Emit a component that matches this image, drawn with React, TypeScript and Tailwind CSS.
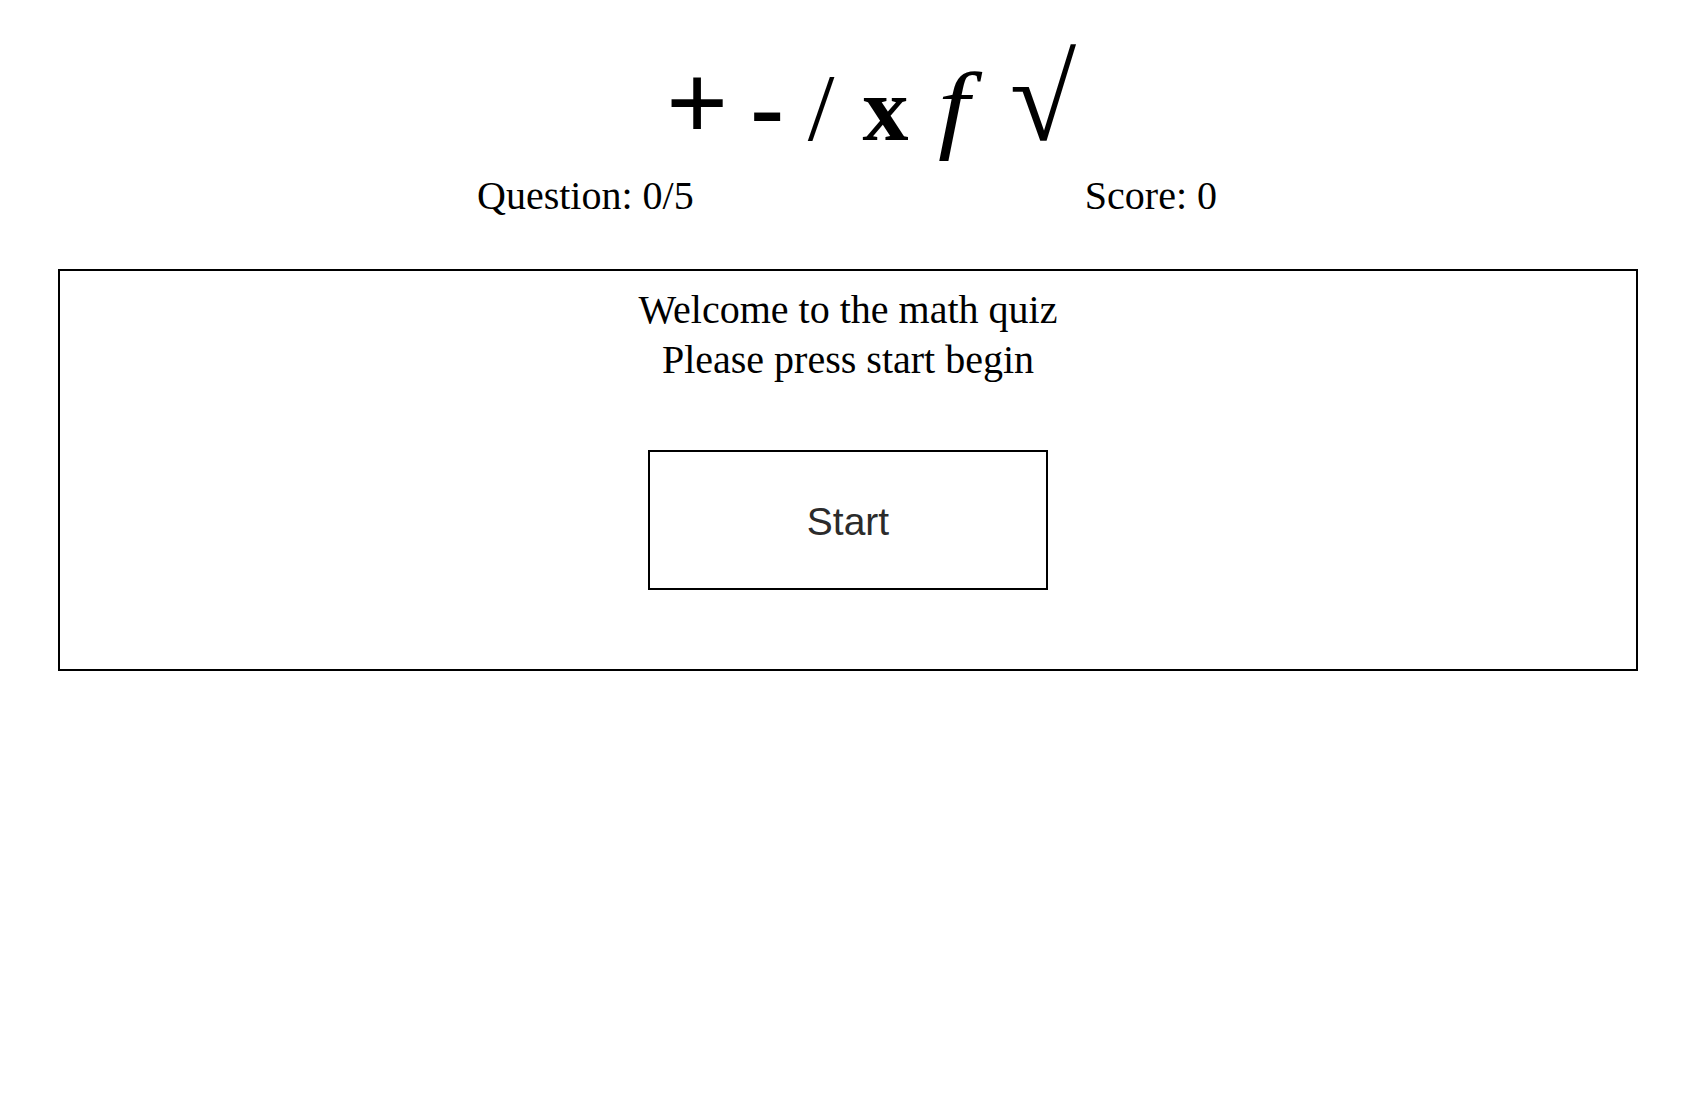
import React from "react";

export default function App() {
  return (
    <div className="min-h-screen bg-white text-black font-['Liberation_Serif','Times_New_Roman',serif]">
      <h1 className="flex h-[172px] items-baseline justify-center pt-[39px] pl-[52px] font-normal leading-none">
        <span className="-ml-[2px] text-[110px] font-bold leading-none">+</span>
        <span className="ml-[22px] text-[100px] font-bold leading-none">-</span>
        <span className="ml-[24px] text-[96px] leading-none">/</span>
        <span className="ml-[28px] text-[92px] font-bold leading-none">x</span>
        <span className="ml-[29px] inline-block origin-left scale-x-[1.15] text-[98px] italic leading-none">f</span>
        <span className="ml-[45px] text-[121px] leading-none">√</span>
      </h1>
      <div className="mx-auto flex w-[740px] translate-x-[1px] justify-between text-[40px] leading-[48px]">
        <span>Question: 0/5</span>
        <span>Score: 0</span>
      </div>
      <div className="ml-[58px] mr-[54px] mt-[49px] flex flex-col items-center border-2 border-black pt-[14px] pb-[79px]">
        <p className="text-center text-[40px] leading-[50px]">
          Welcome to the math quiz
          <br />
          Please press start begin
        </p>
        <button className="mt-[65px] flex h-[140px] w-[400px] items-center justify-center border-2 border-black bg-white pt-[5px] font-['Liberation_Sans',Arial,sans-serif] text-[39px] text-[#2b2b2b]">
          Start
        </button>
      </div>
    </div>
  );
}
